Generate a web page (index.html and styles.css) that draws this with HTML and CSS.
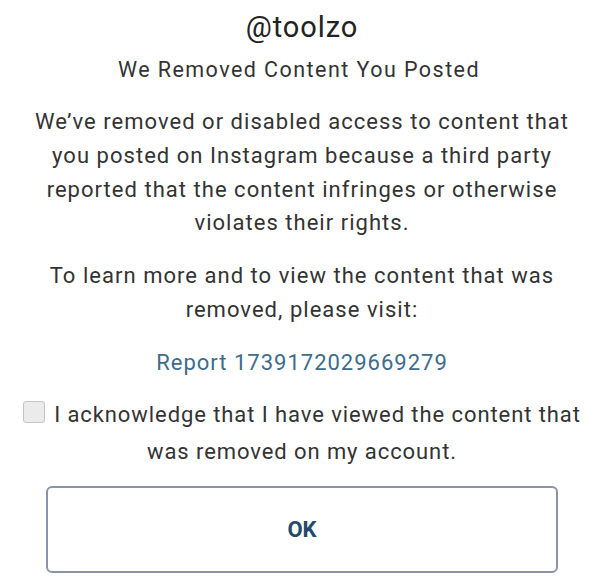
FILE: index.html
```html
<!DOCTYPE html>
<html>
<head>
<meta charset="utf-8">
<link rel="stylesheet" href="styles.css">
</head>
<body>
<div class="dialog">
  <h1 class="user">@toolzo</h1>
  <h2 class="title">We Removed Content You Posted</h2>
  <p class="para">We’ve removed or disabled access to content that<br>you posted on Instagram because a third party<br>reported that the content infringes or otherwise<br>violates their rights.</p>
  <p class="para second">To learn more and to view the content that was<br>removed, please visit:</p>
  <a class="report">Report 1739172029669279</a>
  <label class="ack"><span class="box"></span>I acknowledge that I have viewed the content that<br>was removed on my account.</label>
  <button class="ok">OK</button>
</div>
</body>
</html>
```
FILE: styles.css
```css
html, body { margin: 0; padding: 0; background: #fff; }
body { font-family: Roboto, "Noto Sans", sans-serif; color: #262626; }
.dialog { width: 600px; height: 582px; box-sizing: border-box; padding-left: 4px; display: flex; flex-direction: column; align-items: center; text-align: center; }
.user { margin: 9px 0 0; font-size: 29px; font-weight: 400; line-height: 36px; color: #222; letter-spacing: 0.9px; white-space: nowrap; }
.title { margin: 12px 0 0; font-size: 21.5px; font-weight: 400; line-height: 26px; color: #333; letter-spacing: 1.45px; white-space: nowrap; margin-right: 6px; }
.para { margin: 22px 0 0; font-size: 22px; line-height: 33.8px; color: #333; letter-spacing: 1.03px; white-space: nowrap; }
.para.second { margin-top: 19px; }
.report { margin-top: 19px; font-size: 22px; line-height: 33px; color: #3d6c8c; letter-spacing: 1px; white-space: nowrap; }
.ack { margin-top: 17px; font-size: 22px; line-height: 37px; color: #333; letter-spacing: 0.92px; display: block; white-space: nowrap; }
.box { display: inline-block; width: 20px; height: 20px; border: 1.5px solid #c4c4c4; border-radius: 3px; background: #ebebeb; vertical-align: -1px; margin-right: 9px; }
.ok { margin-top: 16px; width: 512px; height: 87px; border: 2px solid #8a94a6; border-radius: 6px; background: #fff; font-family: Roboto, sans-serif; font-weight: 700; font-size: 22px; color: #24496b; }
```
